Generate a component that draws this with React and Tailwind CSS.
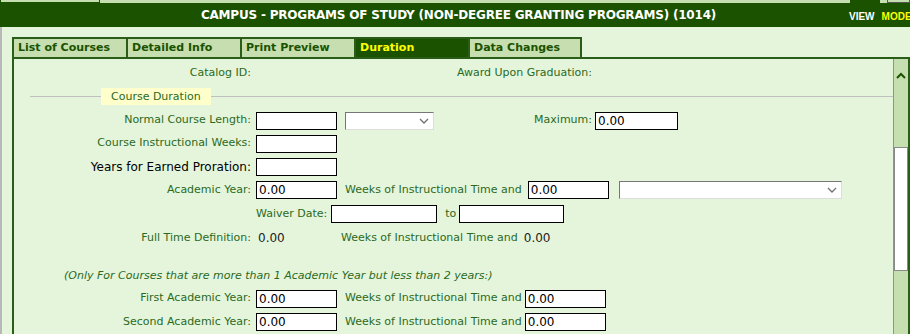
import React from 'react';

const tabs = ['List of Courses', 'Detailed Info', 'Print Preview', 'Duration', 'Data Changes'];

const Label = ({ children, className = '' }) => (
  <div className={`w-[242px] shrink-0 text-right pr-[5px] ${className}`}>{children}</div>
);

const Input = ({ value = '', w = 'w-[81px]' }) => (
  <div className={`${w} h-[18px] shrink-0 bg-white border border-black px-[2px] text-[12px] leading-[16px] text-black`}>
    {value}
  </div>
);

const Select = ({ w }) => (
  <div className={`${w} h-[18px] shrink-0 bg-white border border-[#767676] border-b-[#dcdcdc] border-r-[#dcdcdc] flex items-center justify-end pr-[4px]`}>
    <svg width="10" height="6" viewBox="0 0 10 6">
      <path d="M1 1 L5 5 L9 1" fill="none" stroke="#707070" strokeWidth="1.3" />
    </svg>
  </div>
);

const Row = ({ h = 'h-[23px]', children }) => (
  <div className={`${h} flex items-center`}>{children}</div>
);

export default function App() {
  return (
    <div className="w-[910px] h-[334px] overflow-hidden bg-[#e4f5dc] font-['DejaVu_Sans',sans-serif] text-[11px] text-[#2b6a1c] flex flex-col">
      {/* top strip */}
      <div className="h-[3px] bg-[#c6dfb0] flex">
        <div className="w-[100px] border-b border-x border-[#1a5200]" />
        <div className="flex-1" />
        <div className="w-[30px] bg-[#1a5200] mr-[7px]" />
        <div className="w-[23px] border border-t-0 border-[#555]" />
      </div>

      {/* header */}
      <div className="h-[24px] bg-[#1a5200] flex items-center relative">
        <div className="flex-1 text-center text-white font-bold text-[12px] tracking-[-0.2px] pl-[7px]">
          CAMPUS - PROGRAMS OF STUDY (NON-DEGREE GRANTING PROGRAMS) (1014)
        </div>
        <div className="absolute left-[849px] top-[6px] flex gap-[7px] text-[10px] font-bold font-['Liberation_Sans',sans-serif]">
          <span className="text-white">VIEW</span>
          <span className="text-[#ffff00]">MODE</span>
        </div>
      </div>

      <div className="flex-1 flex border-l-[2px] border-[#b8b8b8]">
        <div className="flex-1 flex flex-col pl-[10px] pt-[10px]">
          {/* tabs */}
          <div className="flex h-[20px]">
            {tabs.map((t, i) => (
              <div
                key={t}
                className={`w-[114px] border-2 border-b-0 border-[#2a5e18] ${i < tabs.length - 1 ? 'border-r-0' : ''} px-[4px] font-bold text-[11px] leading-[17px] ${
                  t === 'Duration' ? 'bg-[#1a5200] text-[#ffff00]' : 'bg-[#c6deb0] text-[#1a5200]'
                }`}
              >
                {t}
              </div>
            ))}
          </div>

          {/* panel */}
          <div className="flex-1 flex border-t-2 border-l-2 border-r-2 border-[#2a5e18]">
            <div className="flex-1 flex flex-col pt-[3px]">
              <Row h="h-[22px]">
                <Label>Catalog ID:</Label>
                <div className="w-[336px] text-right">Award Upon Graduation:</div>
              </Row>

              {/* fieldset legend */}
              <div className="h-[25px] flex items-center">
                <div className="w-[16px]" />
                <div className="w-[71px] h-px bg-[#c0c0c0]" />
                <div className="bg-[#ffffcc] px-[10px] h-[17px] leading-[17px]">Course Duration</div>
                <div className="flex-1 h-px bg-[#c0c0c0]" />
              </div>

              <Row>
                <Label>Normal Course Length:</Label>
                <Input />
                <div className="w-[8px]" />
                <Select w="w-[89px]" />
                <div className="w-[161px] text-right pr-[3px]">Maximum:</div>
                <Input value="0.00" w="w-[83px]" />
              </Row>
              <Row>
                <Label>Course Instructional Weeks:</Label>
                <Input />
              </Row>
              <Row>
                <Label className="text-black text-[12px]">Years for Earned Proration:</Label>
                <Input />
              </Row>
              <Row h="h-[24px]">
                <Label>Academic Year:</Label>
                <Input value="0.00" />
                <div className="pl-[8px] pr-[6px]">Weeks of Instructional Time and</div>
                <Input value="0.00" />
                <div className="w-[10px]" />
                <Select w="w-[223px]" />
              </Row>
              <Row h="h-[24px]">
                <div className="w-[242px] shrink-0" />
                <div className="pr-[4px]">Waiver Date:</div>
                <Input w="w-[106px]" />
                <div className="pl-[8px] pr-[3px]">to</div>
                <Input w="w-[105px]" />
              </Row>
              <Row h="h-[24px]">
                <Label>Full Time Definition:</Label>
                <div className="w-[85px] pl-[2px] text-[12px] text-[#222]">0.00</div>
                <div className="pr-[6px]">Weeks of Instructional Time and</div>
                <div className="text-[12px] text-[#222]">0.00</div>
              </Row>
              <div className="h-[16px]" />
              <Row h="h-[21px]">
                <div className="pl-[50px] italic">
                  (Only For Courses that are more than 1 Academic Year but less than 2 years:)
                </div>
              </Row>
              <Row>
                <Label>First Academic Year:</Label>
                <Input value="0.00" />
                <div className="pl-[8px] pr-[3px]">Weeks of Instructional Time and</div>
                <Input value="0.00" />
              </Row>
              <Row h="h-[24px]">
                <Label>Second Academic Year:</Label>
                <Input value="0.00" />
                <div className="pl-[8px] pr-[3px]">Weeks of Instructional Time and</div>
                <Input value="0.00" />
              </Row>
            </div>

            {/* scrollbar */}
            <div className="w-[15px] bg-[#c6dfb0] border-l border-[#8a9a80] flex flex-col">
              <div className="h-[32px] flex items-center justify-center">
                <svg width="10" height="7" viewBox="0 0 10 7">
                  <path d="M1 6 L5 2 L9 6" fill="none" stroke="#1a5200" strokeWidth="2" />
                </svg>
              </div>
              <div className="h-[56px]" />
              <div className="h-[124px] bg-white border border-[#8a8a8a]" />
              <div className="flex-1" />
            </div>
          </div>
        </div>
      </div>
    </div>
  );
}
